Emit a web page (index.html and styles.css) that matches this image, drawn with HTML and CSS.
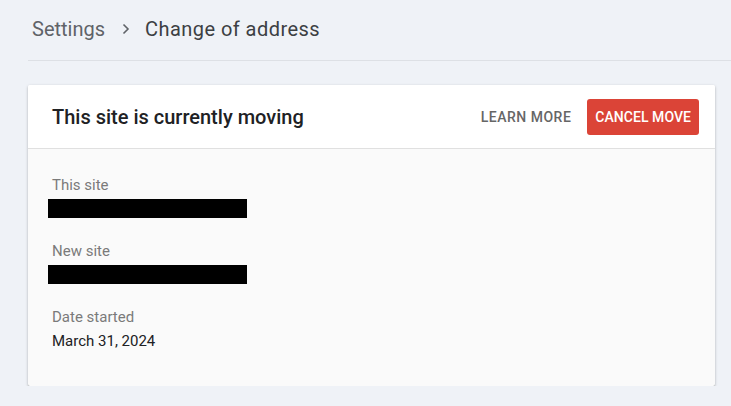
FILE: index.html
```html
<!DOCTYPE html>
<html>
<head>
<meta charset="utf-8">
<link rel="stylesheet" href="styles.css">
</head>
<body>
<div class="page">
  <nav class="crumbs">
    <span class="crumb-parent">Settings</span>
    <svg class="chev" width="10" height="12" viewBox="0 0 10 12"><path d="M2.5 1.5 L7 6 L2.5 10.5" fill="none" stroke="#5f6368" stroke-width="1.6"/></svg>
    <span class="crumb-current">Change of address</span>
  </nav>
  <section class="card">
    <header class="card-head">
      <h1 class="card-title">This site is currently moving</h1>
      <div class="actions">
        <button class="btn-text">LEARN MORE</button>
        <button class="btn-danger">CANCEL MOVE</button>
      </div>
    </header>
    <div class="card-body">
      <div class="field">
        <div class="label">This site</div>
        <div class="redacted"></div>
      </div>
      <div class="field">
        <div class="label">New site</div>
        <div class="redacted"></div>
      </div>
      <div class="field">
        <div class="label">Date started</div>
        <div class="value">March 31, 2024</div>
      </div>
    </div>
  </section>
</div>
</body>
</html>
```
FILE: styles.css
```css
html, body {
  margin: 0;
  padding: 0;
  background: #eff2f7;
  font-family: Roboto, "Liberation Sans", sans-serif;
}
.page {
  padding-left: 28px;
}
.crumbs {
  display: flex;
  align-items: center;
  height: 61px;
  box-sizing: border-box;
  padding-left: 4px;
  padding-bottom: 3px;
  border-bottom: 1px solid #dde0e5;
  font-size: 20px;
}
.crumb-parent {
  color: #5f6368;
}
.chev {
  margin: 0 14px 0 16px;
}
.crumb-current {
  color: #3c4043;
  letter-spacing: 0.45px;
}
.card {
  margin-top: 24px;
  width: 687px;
  background: #fafafa;
  box-shadow: 0 1px 3px rgba(0,0,0,0.25), 0 1px 1px rgba(0,0,0,0.14);
  border-radius: 2px;
}
.card-head {
  display: flex;
  align-items: center;
  justify-content: space-between;
  height: 64px;
  box-sizing: border-box;
  padding: 0 16px 0 24px;
  background: #fff;
  border-bottom: 1px solid #e0e0e0;
  border-radius: 2px 2px 0 0;
}
.card-title {
  margin: 0;
  font-size: 20px;
  font-weight: 500;
  color: #202124;
}
.actions {
  display: flex;
  align-items: center;
  gap: 8px;
}
button {
  font-family: inherit;
  font-size: 14px;
  font-weight: 500;
  border: none;
  cursor: pointer;
}
.btn-text {
  background: transparent;
  color: #666666;
  padding: 0 8px;
  height: 36px;
  letter-spacing: 0.5px;
}
.btn-danger {
  background: #db4437;
  color: #fff;
  height: 36px;
  padding: 0 8px;
  border-radius: 3px;
  letter-spacing: 0.05px;
}
.card-body {
  padding: 27px 24px 36px 24px;
  display: flex;
  flex-direction: column;
  gap: 24px;
}
.label {
  font-size: 15px;
  color: #7a7a7a;
  line-height: 18px;
}
.redacted {
  margin-top: 5px;
  margin-left: -4px;
  width: 199px;
  height: 19px;
  background: #000;
}
.value {
  margin-top: 6px;
  font-size: 15px;
  color: #202124;
  line-height: 18px;
}
```
